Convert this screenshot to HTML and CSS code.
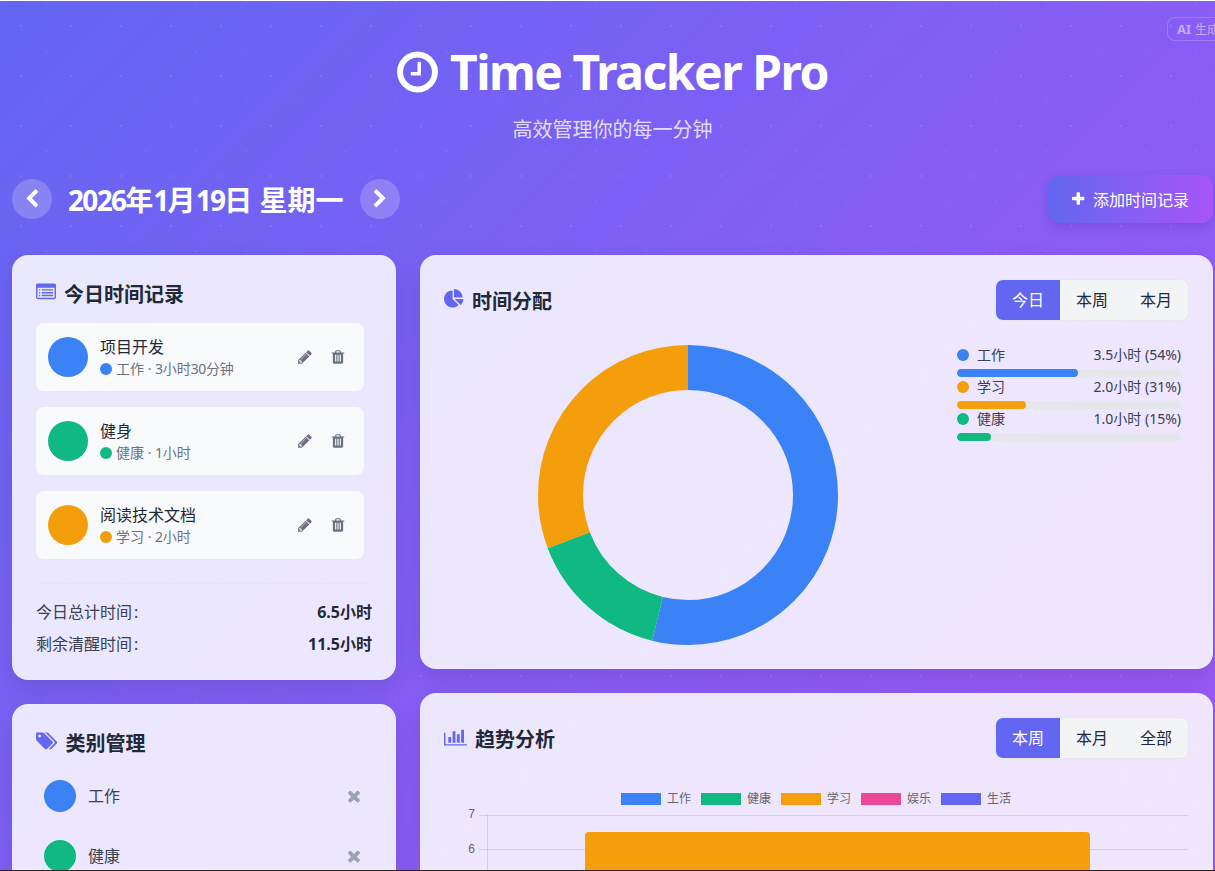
FILE: index.html
```html
<!DOCTYPE html>
<html lang="zh-CN">
<head>
<meta charset="utf-8">
<title>Time Tracker Pro</title>
<link rel="stylesheet" href="styles.css">
</head>
<body>
<svg class="sprite" width="0" height="0" aria-hidden="true">
  <symbol id="i-clock" viewBox="128 0 1536 1792"><path d="M1024 544v448q0 14-9 23t-23 9h-320q-14 0-23-9t-9-23v-64q0-14 9-23t23-9h224v-352q0-14 9-23t23-9h64q14 0 23 9t9 23zm416 352q0-148-73-273t-198-198-273-73-273 73-198 198-73 273 73 273 198 198 273 73 273-73 198-198 73-273zm224 0q0 209-103 385.5t-279.5 279.5-385.5 103-385.5-103-279.5-279.5-103-385.5 103-385.5 279.5-279.5 385.5-103 385.5 103 279.5 279.5 103 385.5z"/></symbol>
  <symbol id="i-left" viewBox="0 0 1792 1792"><path d="M1427 301l-531 531 531 531q19 19 19 45t-19 45l-166 166q-19 19-45 19t-45-19l-742-742q-19-19-19-45t19-45l742-742q19-19 45-19t45 19l166 166q19 19 19 45t-19 45z"/></symbol>
  <symbol id="i-right" viewBox="0 0 1792 1792"><path d="M1363 877l-742 742q-19 19-45 19t-45-19l-166-166q-19-19-19-45t19-45l531-531-531-531q-19-19-19-45t19-45l166-166q19-19 45-19t45 19l742 742q19 19 19 45t-19 45z"/></symbol>
  <symbol id="i-plus" viewBox="192 0 1408 1792"><path d="M1600 736v192q0 40-28 68t-68 28h-416v416q0 40-28 68t-68 28h-192q-40 0-68-28t-28-68v-416h-416q-40 0-68-28t-28-68v-192q0-40 28-68t68-28h416v-416q0-40 28-68t68-28h192q40 0 68 28t28 68v416h416q40 0 68 28t28 68z"/></symbol>
  <symbol id="i-list" viewBox="0 0 1792 1792"><path d="M384 1184v64q0 13-9.5 22.5t-22.5 9.5h-64q-13 0-22.5-9.5t-9.5-22.5v-64q0-13 9.5-22.5t22.5-9.5h64q13 0 22.5 9.5t9.5 22.5zm0-256v64q0 13-9.5 22.5t-22.5 9.5h-64q-13 0-22.5-9.5t-9.5-22.5v-64q0-13 9.5-22.5t22.5-9.5h64q13 0 22.5 9.5t9.5 22.5zm0-256v64q0 13-9.5 22.5t-22.5 9.5h-64q-13 0-22.5-9.5t-9.5-22.5v-64q0-13 9.5-22.5t22.5-9.5h64q13 0 22.5 9.5t9.5 22.5zm1152 512v64q0 13-9.5 22.5t-22.5 9.5h-960q-13 0-22.5-9.5t-9.5-22.5v-64q0-13 9.5-22.5t22.5-9.5h960q13 0 22.5 9.5t9.5 22.5zm0-256v64q0 13-9.5 22.5t-22.5 9.5h-960q-13 0-22.5-9.5t-9.5-22.5v-64q0-13 9.5-22.5t22.5-9.5h960q13 0 22.5 9.5t9.5 22.5zm0-256v64q0 13-9.5 22.5t-22.5 9.5h-960q-13 0-22.5-9.5t-9.5-22.5v-64q0-13 9.5-22.5t22.5-9.5h960q13 0 22.5 9.5t9.5 22.5zm128 704v-832q0-13-9.5-22.5t-22.5-9.5h-1472q-13 0-22.5 9.5t-9.5 22.5v832q0 13 9.5 22.5t22.5 9.5h1472q13 0 22.5-9.5t9.5-22.5zm128-1088v1088q0 66-47 113t-113 47h-1472q-66 0-113-47t-47-113v-1088q0-66 47-113t113-47h1472q66 0 113 47t47 113z"/></symbol>
  <symbol id="i-pie" viewBox="0 0 1792 1792"><path d="M768 890l546 546q-106 108-247.5 168t-298.5 60q-209 0-385.5-103t-279.5-279.5-103-385.5 103-385.5 279.5-279.5 385.5-103v762zm187 6h773q0 157-60 298.5t-168 247.5zm709-128h-768v-768q209 0 385.5 103t279.5 279.5 103 385.5z"/></symbol>
  <symbol id="i-tags" viewBox="0 0 1920 1792"><path d="M448 448q0-53-37.5-90.5t-90.5-37.5-90.5 37.5-37.5 90.5 37.5 90.5 90.5 37.5 90.5-37.5 37.5-90.5zm1067 576q0 53-37 90l-491 492q-39 37-91 37-53 0-90-37l-715-716q-38-37-64.5-101t-26.5-117v-416q0-52 38-90t90-38h416q53 0 117 26.5t102 64.5l715 714q37 39 37 91zm384 0q0 53-37 90l-491 492q-39 37-91 37-36 0-59-14t-53-45l470-470q37-37 37-90 0-52-37-91l-715-714q-38-38-102-64.5t-117-26.5h224q53 0 117 26.5t102 64.5l715 714q37 39 37 91z"/></symbol>
  <symbol id="i-bar" viewBox="0 0 2048 1792"><path d="M640 896v512h-256v-512h256zm384-512v1024h-256v-1024h256zm1024 1152v128h-2048v-1152h128v1024h1920zm-640-896v768h-256v-768h256zm384-384v1152h-256v-1152h256z"/></symbol>
  <symbol id="i-pencil" viewBox="0 0 1792 1792"><path d="M491 1536l91-91-235-235-91 91v107h128v128h107zm523-928q0-22-22-22-10 0-17 7l-542 542q-7 7-7 17 0 22 22 22 10 0 17-7l542-542q7-7 7-17zm-54-192l416 416-832 832h-416v-416zm683 96q0 53-37 90l-166 166-416-416 166-165q36-38 90-38 53 0 91 38l235 234q37 39 37 91z"/></symbol>
  <symbol id="i-trash" viewBox="0 0 1792 1792"><path d="M704 1376v-704q0-14-9-23t-23-9h-64q-14 0-23 9t-9 23v704q0 14 9 23t23 9h64q14 0 23-9t9-23zm256 0v-704q0-14-9-23t-23-9h-64q-14 0-23 9t-9 23v704q0 14 9 23t23 9h64q14 0 23-9t9-23zm256 0v-704q0-14-9-23t-23-9h-64q-14 0-23 9t-9 23v704q0 14 9 23t23 9h64q14 0 23-9t9-23zm-544-992h448l-48-117q-7-9-17-11h-317q-10 2-17 11zm928 32v64q0 14-9 23t-23 9h-96v948q0 83-47 143.5t-113 60.5h-832q-66 0-113-58.5t-47-141.5v-952h-96q-14 0-23-9t-9-23v-64q0-14 9-23t23-9h309l70-167q15-37 54-63t79-26h320q40 0 79 26t54 63l70 167h309q14 0 23 9t9 23z"/></symbol>
  <symbol id="i-times" viewBox="0 0 1792 1792"><path d="M1490 1322q0 40-28 68l-136 136q-28 28-68 28t-68-28l-294-294-294 294q-28 28-68 28t-68-28l-136-136q-28-28-28-68t28-68l294-294-294-294q-28-28-28-68t28-68l136-136q28-28 68-28t68 28l294 294 294-294q28-28 68-28t68 28l136 136q28 28 28 68t-28 68l-294 294 294 294q28 28 28 68z"/></symbol>
</svg>

<div class="ai-badge"><b>AI</b> 生成内容</div>

<main class="page">
  <header class="hero">
    <h1 class="hero-title"><svg class="hero-clock"><use href="#i-clock"/></svg><span class="hero-name">Time Tracker Pro</span></h1>
    <p class="hero-sub">高效管理你的每一分钟</p>
  </header>

  <section class="toolbar">
    <div class="date-nav">
      <button class="round-btn"><svg class="ico-20"><use href="#i-left"/></svg></button>
      <h2 class="date-text"><span class="num">2026</span>年<span class="num">1</span>月<span class="num">19</span>日 星期一</h2>
      <button class="round-btn"><svg class="ico-20"><use href="#i-right"/></svg></button>
    </div>
    <button class="add-btn"><svg class="ico-plus"><use href="#i-plus"/></svg>添加时间记录</button>
  </section>

  <section class="columns">
    <div class="col">
      <article class="card">
        <h3 class="card-title"><svg class="ico-title"><use href="#i-list"/></svg>今日时间记录</h3>
        <ul class="entries">
          <li class="entry">
            <span class="avatar c-blue"></span>
            <div class="entry-body">
              <div class="entry-name">项目开发</div>
              <div class="entry-meta"><span class="dot c-blue"></span><span>工作 · <span class="num-sm">3</span>小时<span class="num-sm">30</span>分钟</span></div>
            </div>
            <div class="entry-actions">
              <button class="icon-btn"><svg class="ico-16"><use href="#i-pencil"/></svg></button>
              <button class="icon-btn"><svg class="ico-16"><use href="#i-trash"/></svg></button>
            </div>
          </li>
          <li class="entry">
            <span class="avatar c-green"></span>
            <div class="entry-body">
              <div class="entry-name">健身</div>
              <div class="entry-meta"><span class="dot c-green"></span><span>健康 · <span class="num-sm">1</span>小时</span></div>
            </div>
            <div class="entry-actions">
              <button class="icon-btn"><svg class="ico-16"><use href="#i-pencil"/></svg></button>
              <button class="icon-btn"><svg class="ico-16"><use href="#i-trash"/></svg></button>
            </div>
          </li>
          <li class="entry">
            <span class="avatar c-orange"></span>
            <div class="entry-body">
              <div class="entry-name">阅读技术文档</div>
              <div class="entry-meta"><span class="dot c-orange"></span><span>学习 · <span class="num-sm">2</span>小时</span></div>
            </div>
            <div class="entry-actions">
              <button class="icon-btn"><svg class="ico-16"><use href="#i-pencil"/></svg></button>
              <button class="icon-btn"><svg class="ico-16"><use href="#i-trash"/></svg></button>
            </div>
          </li>
        </ul>
        <div class="totals">
          <div class="total-row"><span>今日总计时间<span class="colon">:</span></span><strong>6.5小时</strong></div>
          <div class="total-row"><span>剩余清醒时间<span class="colon">:</span></span><strong>11.5小时</strong></div>
        </div>
      </article>

      <article class="card">
        <h3 class="card-title"><svg class="ico-tags"><use href="#i-tags"/></svg>类别管理</h3>
        <ul class="cats">
          <li class="cat"><span class="cat-dot c-blue"></span><span class="cat-name">工作</span><svg class="ico-times"><use href="#i-times"/></svg></li>
          <li class="cat"><span class="cat-dot c-green"></span><span class="cat-name">健康</span><svg class="ico-times"><use href="#i-times"/></svg></li>
        </ul>
      </article>
    </div>

    <div class="col">
      <article class="card">
        <div class="card-head">
          <h3 class="card-title flush"><svg class="ico-title"><use href="#i-pie"/></svg>时间分配</h3>
          <div class="segmented">
            <button class="seg active">今日</button>
            <button class="seg">本周</button>
            <button class="seg">本月</button>
          </div>
        </div>
        <div class="dist">
          <div class="donut-wrap">
            <svg class="donut" viewBox="0 0 300 300">
              <circle class="arc arc-blue" cx="150" cy="150" r="127.5" pathLength="100" stroke-dasharray="53.85 46.15" stroke-dashoffset="0"/>
              <circle class="arc arc-green" cx="150" cy="150" r="127.5" pathLength="100" stroke-dasharray="15.38 84.62" stroke-dashoffset="-53.85"/>
              <circle class="arc arc-orange" cx="150" cy="150" r="127.5" pathLength="100" stroke-dasharray="30.77 69.23" stroke-dashoffset="-69.23"/>
            </svg>
          </div>
          <ul class="legend">
            <li class="legend-item">
              <div class="legend-row"><span class="dot-legend c-blue"></span><span class="legend-name">工作</span><span>3.5小时 (54%)</span></div>
              <div class="track"><div class="fill c-blue" style="width:54%"></div></div>
            </li>
            <li class="legend-item">
              <div class="legend-row"><span class="dot-legend c-orange"></span><span class="legend-name">学习</span><span>2.0小时 (31%)</span></div>
              <div class="track"><div class="fill c-orange" style="width:31%"></div></div>
            </li>
            <li class="legend-item">
              <div class="legend-row"><span class="dot-legend c-green"></span><span class="legend-name">健康</span><span>1.0小时 (15%)</span></div>
              <div class="track"><div class="fill c-green" style="width:15%"></div></div>
            </li>
          </ul>
        </div>
      </article>

      <article class="card">
        <div class="card-head">
          <h3 class="card-title flush"><svg class="ico-bar"><use href="#i-bar"/></svg>趋势分析</h3>
          <div class="segmented">
            <button class="seg active">本周</button>
            <button class="seg">本月</button>
            <button class="seg">全部</button>
          </div>
        </div>
        <svg class="trend" viewBox="0 0 745 300">
          <g class="t-legend">
            <rect x="177" y="10" width="40" height="12" fill="#3b82f6"/><text x="223" y="20">工作</text>
            <rect x="257" y="10" width="40" height="12" fill="#10b981"/><text x="303" y="20">健康</text>
            <rect x="337" y="10" width="40" height="12" fill="#f59e0b"/><text x="383" y="20">学习</text>
            <rect x="417" y="10" width="40" height="12" fill="#ec4899"/><text x="463" y="20">娱乐</text>
            <rect x="497" y="10" width="40" height="12" fill="#6366f1"/><text x="543" y="20">生活</text>
          </g>
          <g class="t-grid">
            <line x1="35" y1="32.5" x2="744" y2="32.5"/>
            <line x1="35" y1="66.5" x2="744" y2="66.5"/>
            <line x1="35" y1="100.5" x2="744" y2="100.5"/>
            <line x1="43.5" y1="32" x2="43.5" y2="300"/>
          </g>
          <g class="t-axis">
            <text x="31" y="35">7</text>
            <text x="31" y="70">6</text>
          </g>
          <path d="M141 300V53a4 4 0 0 1 4-4H642a4 4 0 0 1 4 4V300Z" fill="#f59e0b"/>
        </svg>
      </article>
    </div>
  </section>
</main>
</body>
</html>
```

FILE: styles.css
```css
* { box-sizing: border-box; margin: 0; padding: 0; }

html {
  height: 100%;
  overflow: hidden;
  background: #6366f1;
}

body {
  position: relative;
  height: 1400px;
  border-top: 1px solid #fff;
  font-family: "Noto Sans", "Noto Sans CJK SC", sans-serif;
  color: #1f2937;
  background-color: #6366f1;
  background-image:
    radial-gradient(circle at 21px 25px, rgba(255,255,255,.09) 0, rgba(255,255,255,.09) 1px, transparent 1.6px),
    radial-gradient(circle at 46px 0px, rgba(255,255,255,.09) 0, rgba(255,255,255,.09) 1px, transparent 1.6px),
    linear-gradient(135deg, #6366f1 0%, #8b5cf6 50%, #a855f7 100%);
  background-size: 50px 50px, 50px 50px, 100% 100%;
}

html::after {
  content: "";
  position: fixed;
  left: 0;
  right: 0;
  bottom: 0;
  height: 1px;
  background: #2b2222;
}

ul { list-style: none; }
button { font: inherit; border: 0; background: none; cursor: pointer; color: inherit; }
svg { fill: currentColor; flex: none; display: block; }
.sprite { position: absolute; }

.ai-badge {
  position: absolute;
  top: 16px;
  right: -38px;
  height: 24px;
  padding: 0 9px;
  display: flex;
  align-items: center;
  gap: 4px;
  border: 1px solid rgba(255,255,255,.2);
  border-radius: 8px;
  font-size: 12px;
  color: rgba(255,255,255,.5);
  white-space: nowrap;
}
.ai-badge b { font-size: 13px; }

.page { padding: 0 2px 0 12px; }

.hero { padding-top: 35px; text-align: center; margin-bottom: 30px; }
.hero-title {
  display: flex;
  justify-content: center;
  align-items: center;
  gap: 12px;
  font-size: 48px;
  line-height: 72px;
  font-weight: 700;
  color: #fff;
}
.hero-name { letter-spacing: -1.5px; }
.hero-clock { width: 41px; height: 48px; }
.hero-sub {
  margin-top: 7px;
  font-size: 20px;
  line-height: 30px;
  color: rgba(255,255,255,.8);
}

.toolbar {
  display: flex;
  justify-content: space-between;
  align-items: center;
  height: 48px;
  margin-bottom: 32px;
}
.date-nav { display: flex; align-items: center; gap: 16px; }
.date-text { font-size: 28px; line-height: 40px; padding-top: 2px; font-weight: 700; color: #fff; }
.num { letter-spacing: -1.7px; }
.num-sm { letter-spacing: -.4px; }
.round-btn {
  width: 40px;
  height: 40px;
  border-radius: 50%;
  background: rgba(255,255,255,.2);
  color: #fff;
  display: flex;
  align-items: center;
  justify-content: center;
}
.ico-20 { width: 20px; height: 20px; }

.add-btn {
  height: 48px;
  padding: 0 24px;
  display: flex;
  align-items: center;
  gap: 8px;
  border-radius: 12px;
  font-size: 16px;
  color: #fff;
  background: linear-gradient(90deg, #6366f1, #a855f7);
  box-shadow: 0 4px 12px rgba(0,0,0,.12);
}
.ico-plus { width: 12.6px; height: 16px; }

.columns {
  display: grid;
  grid-template-columns: 384px 1fr;
  gap: 24px;
  align-items: start;
}
.col { display: flex; flex-direction: column; gap: 24px; }

.card {
  padding: 24px;
  border-radius: 16px;
  background: rgba(255,255,255,.85);
  box-shadow: 0 10px 25px rgba(0,0,0,.1);
}

.card-title {
  display: flex;
  align-items: center;
  gap: 8px;
  padding-top: 2px;
  font-size: 20px;
  line-height: 28px;
  font-weight: 700;
  color: #1f2937;
  margin-bottom: 14px;
}
.card-title.flush { padding-top: 4px; margin-bottom: 0; }
.card-title svg { color: #6366f1; margin-top: -6px; }
.ico-title { width: 20px; height: 20px; }
.ico-tags { width: 21.4px; height: 20px; }
.ico-bar { width: 22.9px; height: 20px; }

.entries {
  display: flex;
  flex-direction: column;
  gap: 16px;
  margin-right: 8px;
}
.entry {
  display: flex;
  align-items: center;
  gap: 12px;
  padding: 12px;
  border-radius: 8px;
  background: #f9fafb;
}
.avatar { width: 40px; height: 40px; border-radius: 50%; flex: none; }
.entry-body { flex: 1; min-width: 0; }
.entry-name { font-size: 16px; line-height: 24px; color: #1f2937; }
.entry-meta {
  display: flex;
  align-items: center;
  gap: 4px;
  font-size: 14px;
  line-height: 20px;
  color: #6b7280;
}
.dot { width: 12px; height: 12px; border-radius: 50%; flex: none; }
.entry-actions { display: flex; gap: 5px; }
.icon-btn {
  width: 28px;
  height: 28px;
  display: flex;
  align-items: center;
  justify-content: center;
  color: #6b7280;
}
.ico-16 { width: 16px; height: 16px; }

.totals {
  margin-top: 24px;
  padding-top: 16px;
  border-top: 1px solid #e5e7eb;
  display: flex;
  flex-direction: column;
  gap: 8px;
}
.total-row {
  display: flex;
  justify-content: space-between;
  font-size: 16px;
  line-height: 24px;
  color: #374151;
}
.total-row strong { color: #1f2937; font-weight: 700; }
.colon { margin-left: 2px; }

.cats { display: flex; flex-direction: column; gap: 12px; }
.cat {
  display: flex;
  align-items: center;
  gap: 12px;
  padding: 8px 9px 8px 8px;
}
.cat-dot { width: 32px; height: 32px; border-radius: 50%; flex: none; }
.cat-name { flex: 1; font-size: 16px; line-height: 24px; color: #374151; }
.ico-times { width: 18px; height: 18px; color: #9ca3af; }

.c-blue { background: #3b82f6; }
.c-green { background: #10b981; }
.c-orange { background: #f59e0b; }

.card-head {
  display: flex;
  justify-content: space-between;
  align-items: center;
  margin-bottom: 24px;
}
.segmented {
  display: flex;
  border: 1px solid #e5e7eb;
  border-radius: 8px;
  overflow: hidden;
  background: #f3f4f6;
}
.seg {
  width: 64px;
  height: 40px;
  font-size: 16px;
  line-height: 24px;
  color: #1f2937;
}
.seg.active { background: #6366f1; color: #fff; }

.dist { display: flex; gap: 24px; padding-right: 8px; }
.donut-wrap { flex: 1; display: flex; justify-content: center; padding-right: 1px; }
.donut { width: 300px; height: 300px; transform: rotate(-90deg); }
.arc { fill: none; stroke-width: 45; }
.arc-blue { stroke: #3b82f6; }
.arc-green { stroke: #10b981; }
.arc-orange { stroke: #f59e0b; }

.legend { width: 224px; flex: none; display: flex; flex-direction: column; }
.legend-row {
  display: flex;
  align-items: center;
  font-size: 14px;
  line-height: 20px;
  color: #374151;
  margin-bottom: 4px;
}
.dot-legend { width: 12px; height: 12px; border-radius: 50%; flex: none; margin-right: 8px; }
.legend-name { flex: 1; }
.track { height: 8px; border-radius: 4px; background: #e5e7eb; overflow: hidden; }
.fill { height: 100%; border-radius: 4px; }

.trend {
  display: block;
  width: 745px;
  height: 300px;
}
.trend text {
  font-family: "Liberation Sans", "Noto Sans CJK SC", sans-serif;
  font-size: 12px;
  fill: #666;
}
.t-grid line { stroke: rgba(0,0,0,.1); stroke-width: 1; }
.t-axis text { text-anchor: end; }
```
